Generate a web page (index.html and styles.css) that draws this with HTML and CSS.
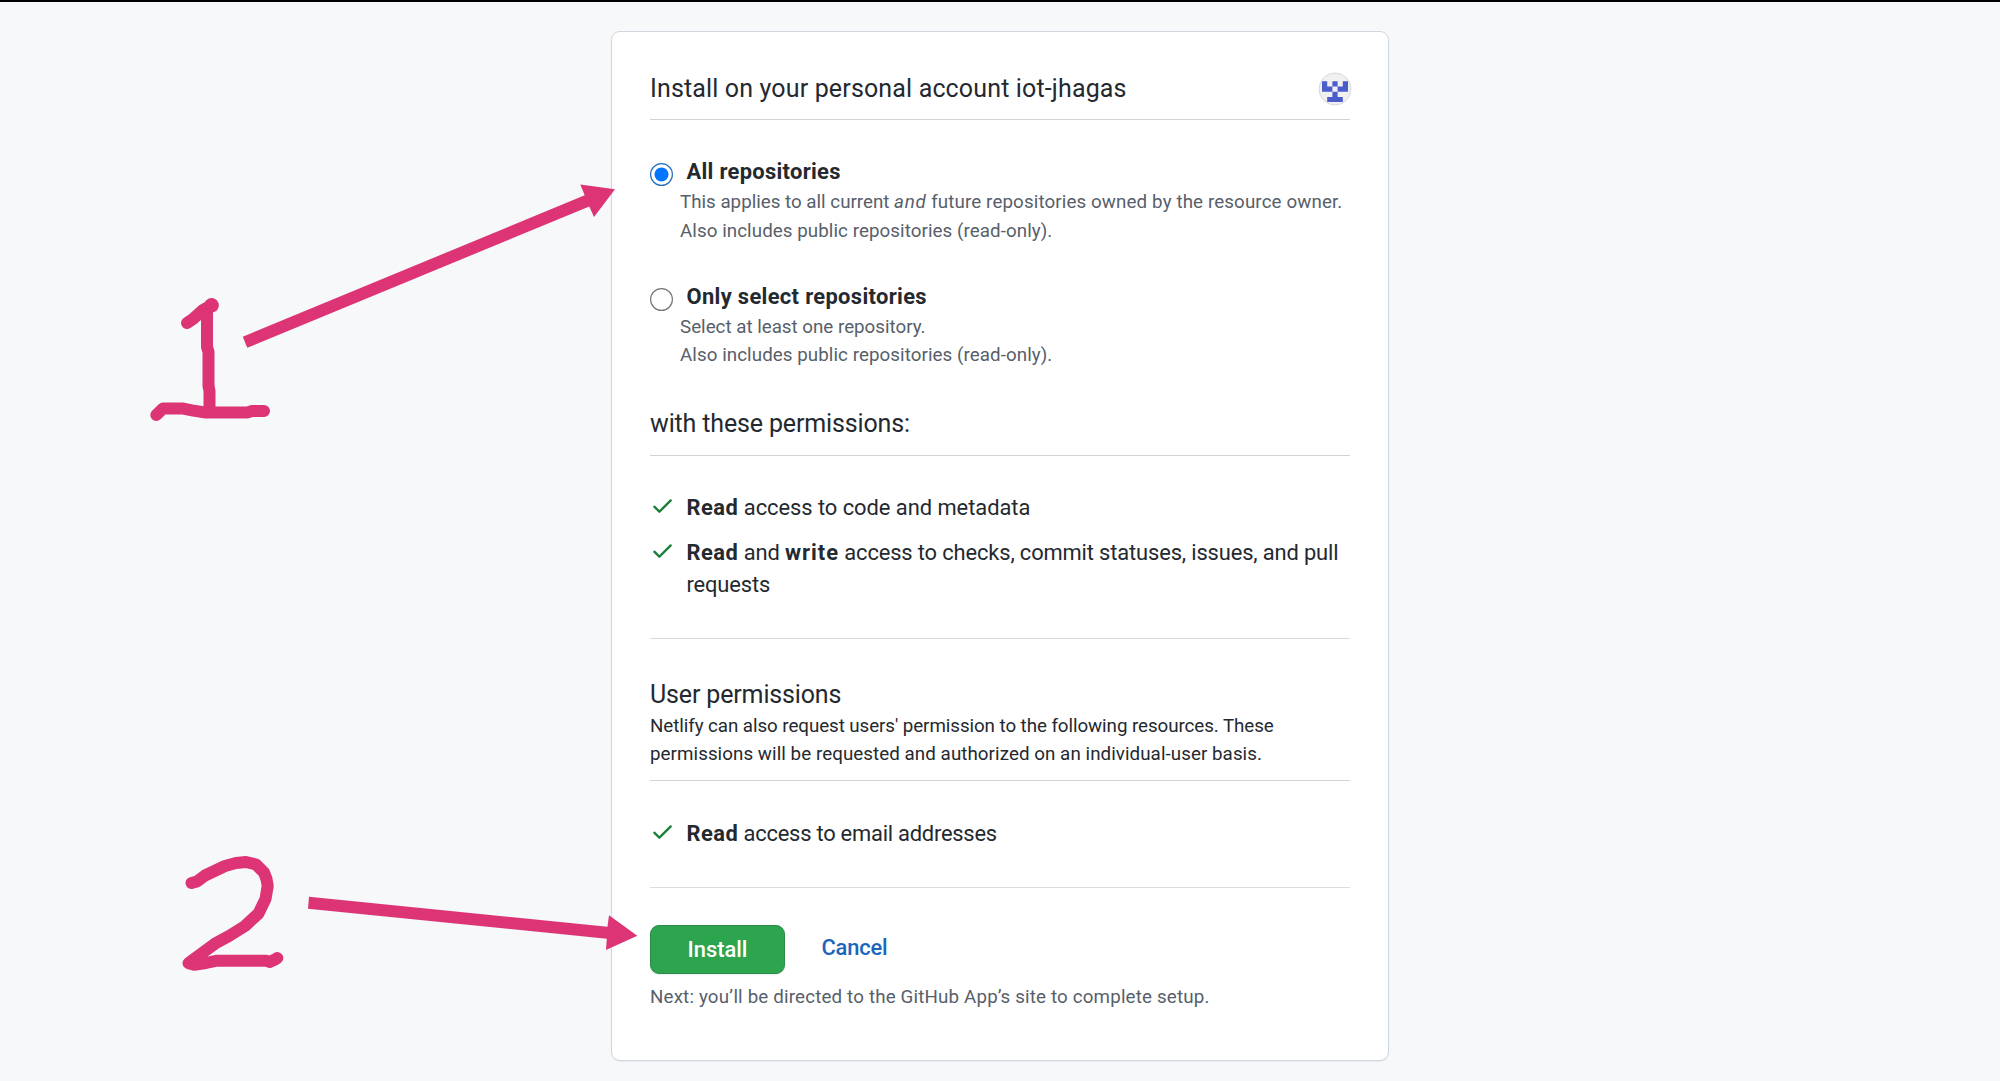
FILE: index.html
```
<!DOCTYPE html>
<html lang="en">
<head>
<meta charset="utf-8">
<title>Install Netlify</title>
<link rel="stylesheet" href="styles.css">
</head>
<body>
<main class="card">
  <header class="section-head account">
    <h1 class="heading account-title">Install on your personal account iot-jhagas</h1>
    <svg class="avatar" viewBox="0 0 34 34" aria-hidden="true">
      <circle cx="17" cy="17" r="16" fill="#f0f0f1" stroke="#d6d9dd"/>
      <path fill="#4b5dcb" d="M4 9.3h5.2v5.2h5.2v5.2H4zM14.4 9.3h5.2v5.2h-5.2zM24.8 9.3H30v10.4H19.6v-5.2h5.2zM14.4 19.7h5.2v5.2h5.2v5.1H9.2v-5.1h5.2z"/>
    </svg>
  </header>

  <section class="option">
    <label class="option-title">
      <svg class="radio" viewBox="0 0 23 23"><circle cx="11.5" cy="11.5" r="10.9" fill="#fff" stroke="#246fc0" stroke-width="1.2"/><circle cx="11.5" cy="11.5" r="7" fill="#0075ff"/></svg>
      <span class="name-all">All repositories</span>
    </label>
    <p class="option-note note-all">This applies to all current <em>and</em><span class="wide"> future repositories owned by the resource owner.</span><br><span class="also">Also includes public repositories (read-only).</span></p>
  </section>

  <section class="option option-select">
    <label class="option-title">
      <svg class="radio" viewBox="0 0 23 23"><circle cx="11.5" cy="11.5" r="10.9" fill="#fff" stroke="#767676" stroke-width="1.2"/></svg>
      <span class="name-select">Only select repositories</span>
    </label>
    <p class="option-note">Select at least one repository.<br><span class="also">Also includes public repositories (read-only).</span></p>
  </section>

  <header class="section-head permissions-head">
    <h2 class="heading snug">with these permissions:</h2>
  </header>

  <ul class="permissions">
    <li>
      <svg class="check" viewBox="0 0 16 16"><path d="M13.78 4.22a.75.75 0 0 1 0 1.06l-7.25 7.25a.75.75 0 0 1-1.06 0L2.22 9.28a.751.751 0 0 1 1.06-1.06L6 10.94l6.72-6.72a.75.75 0 0 1 1.06 0Z"/></svg>
      <span class="permission-text code-access"><b>Read</b> access to code and metadata</span>
    </li>
    <li>
      <svg class="check" viewBox="0 0 16 16"><path d="M13.78 4.22a.75.75 0 0 1 0 1.06l-7.25 7.25a.75.75 0 0 1-1.06 0L2.22 9.28a.751.751 0 0 1 1.06-1.06L6 10.94l6.72-6.72a.75.75 0 0 1 1.06 0Z"/></svg>
      <span class="permission-text checks-access"><b>Read</b> and <b class="write">write</b> access to checks, commit statuses, issues, and pull<br>requests</span>
    </li>
  </ul>

  <header class="section-head user-head">
    <h2 class="heading snug">User permissions</h2>
    <p class="user-note"><span class="netlify">Netlify can also request users' permission to the following resources. These</span><br>permissions will be requested and authorized on an individual-user basis.</p>
  </header>

  <ul class="permissions user-permissions">
    <li>
      <svg class="check" viewBox="0 0 16 16"><path d="M13.78 4.22a.75.75 0 0 1 0 1.06l-7.25 7.25a.75.75 0 0 1-1.06 0L2.22 9.28a.751.751 0 0 1 1.06-1.06L6 10.94l6.72-6.72a.75.75 0 0 1 1.06 0Z"/></svg>
      <span class="permission-text email-access"><b>Read</b> access to email addresses</span>
    </li>
  </ul>

  <div class="actions">
    <button class="install" type="button">Install</button>
    <a class="cancel">Cancel</a>
  </div>
  <p class="next">Next: you’ll be directed to the GitHub App’s site to complete setup.</p>
</main>

<svg class="annotations" viewBox="0 0 2000 1081" aria-hidden="true">
  <g fill="#dc3474">
    <path d="M242.8 336.7 584.7 195.3 580.3 184.4 615 189.3 594 217 589.3 206.5 247.3 347.8Z"/>
    <path d="M309 896.7 607.5 926.7 609 915.3 637.3 935.7 606 950 606.8 938.7 308 908.7Z"/>
  </g>
  <g fill="none" stroke="#dc3474" stroke-width="12" stroke-linecap="round" stroke-linejoin="round">
    <path d="M187 323 193 319 203 310 211.5 305.3M207 308V347L208.5 352V386L209.5 391V411"/>
    <path d="M211.5 305.3h.1" stroke-width="14.5"/>
    <path d="M156.3 415 163 408.4H182L192 410.3 206 412.6H247L252 411H264"/>
    <path d="M191.5 883 197 881.5 205 875.5 225 866 236 863 246 862 256 864.5 264 872.5 266.5 879 267.7 886 265.5 899 258.5 913.5 245 926 229 936 216.5 942.7 194 959 188.5 963.2 194 964.7 206 963 217 960.7H266L269.5 962 275 959.5 277.3 958"/>
  </g>
</svg>
</body>
</html>
```
FILE: styles.css
```
* { box-sizing: border-box; }
body {
  margin: 0;
  height: 1081px;
  overflow: hidden;
  border-top: 2px solid #000;
  background: #f6f8fa;
  color: #24292f;
  font-family: Roboto, "Liberation Sans", sans-serif;
}
h1, h2, p, ul { margin: 0; padding: 0; }
.card {
  width: 778px;
  height: 1030px;
  margin: 29px auto 0;
  padding: 38px 38px 0;
  border: 1px solid #d0d7de;
  border-radius: 9px;
  background: #fff;
  box-shadow: 0 1px 1px rgba(27, 31, 36, .05);
}
.section-head { border-bottom: 1px solid #d0d4d8; }
.account { display: flex; justify-content: space-between; padding-bottom: 11px; }
.heading { font-size: 25px; font-weight: 400; line-height: 38px; white-space: nowrap; }
.account-title { letter-spacing: .15px; }
.snug { letter-spacing: -.15px; }
.avatar { width: 34px; height: 34px; margin: 2px -2px -2px 0; }

.option { margin-top: 36px; }
.option-title {
  display: flex;
  gap: 13.5px;
  font-size: 21.9px;
  font-weight: 700;
  line-height: 32px;
}
.name-all { letter-spacing: .3px; }
.name-select { letter-spacing: .34px; }
.radio { width: 23px; height: 23px; margin-top: 7px; }
.option-note {
  padding-left: 30px;
  color: #57606a;
  font-size: 18.75px;
  line-height: 28px;
  white-space: nowrap;
}
.note-all { line-height: 29px; }
.option-note em { letter-spacing: .7px; }
.wide { letter-spacing: .12px; }
.also { letter-spacing: .07px; }
.option-select { margin-top: 35px; }

.permissions-head { margin-top: 36px; padding-bottom: 12px; }
.permissions {
  display: flex;
  flex-direction: column;
  gap: 12px;
  padding: 36px 0;
  border-bottom: 1px solid #d8dbdf;
  list-style: none;
}
.user-permissions { padding: 37px 0; }
.permissions li { display: flex; gap: 11.5px; }
.check { flex: none; width: 25px; height: 25px; margin-top: 1px; fill: #1a7f37; }
.permission-text { font-size: 21.9px; line-height: 32.5px; white-space: nowrap; }
.permission-text b { letter-spacing: .5px; }
.permission-text .write { letter-spacing: 1px; }
.code-access { letter-spacing: -.04px; }
.checks-access { letter-spacing: -.14px; }
.email-access { letter-spacing: -.23px; }

.user-head { padding: 36px 0 12px; }
.user-head .heading { line-height: 37px; padding-top: 1px; margin-bottom: -1px; }
.user-note { font-size: 18.75px; line-height: 28px; letter-spacing: .063px; white-space: nowrap; }
.netlify { letter-spacing: -.065px; }

.actions { display: flex; gap: 36.5px; margin-top: 37px; font-size: 21.9px; font-weight: 500; }
.install {
  width: 135px;
  height: 49px;
  padding: 0 0 1px;
  border: 1px solid #2c8b48;
  border-radius: 9px;
  background: #2da44e;
  box-shadow: 0 1px 1px rgba(27, 31, 36, .08);
  color: #fff;
  font: 500 21.9px/45px Roboto, sans-serif;
}
.cancel { color: #1a66bd; line-height: 46px; letter-spacing: -.168px; }
.next { margin-top: 9px; color: #57606a; font-size: 18.75px; line-height: 28px; letter-spacing: .164px; }

.annotations { position: absolute; left: 0; top: 0; width: 2000px; height: 1081px; pointer-events: none; }
```
